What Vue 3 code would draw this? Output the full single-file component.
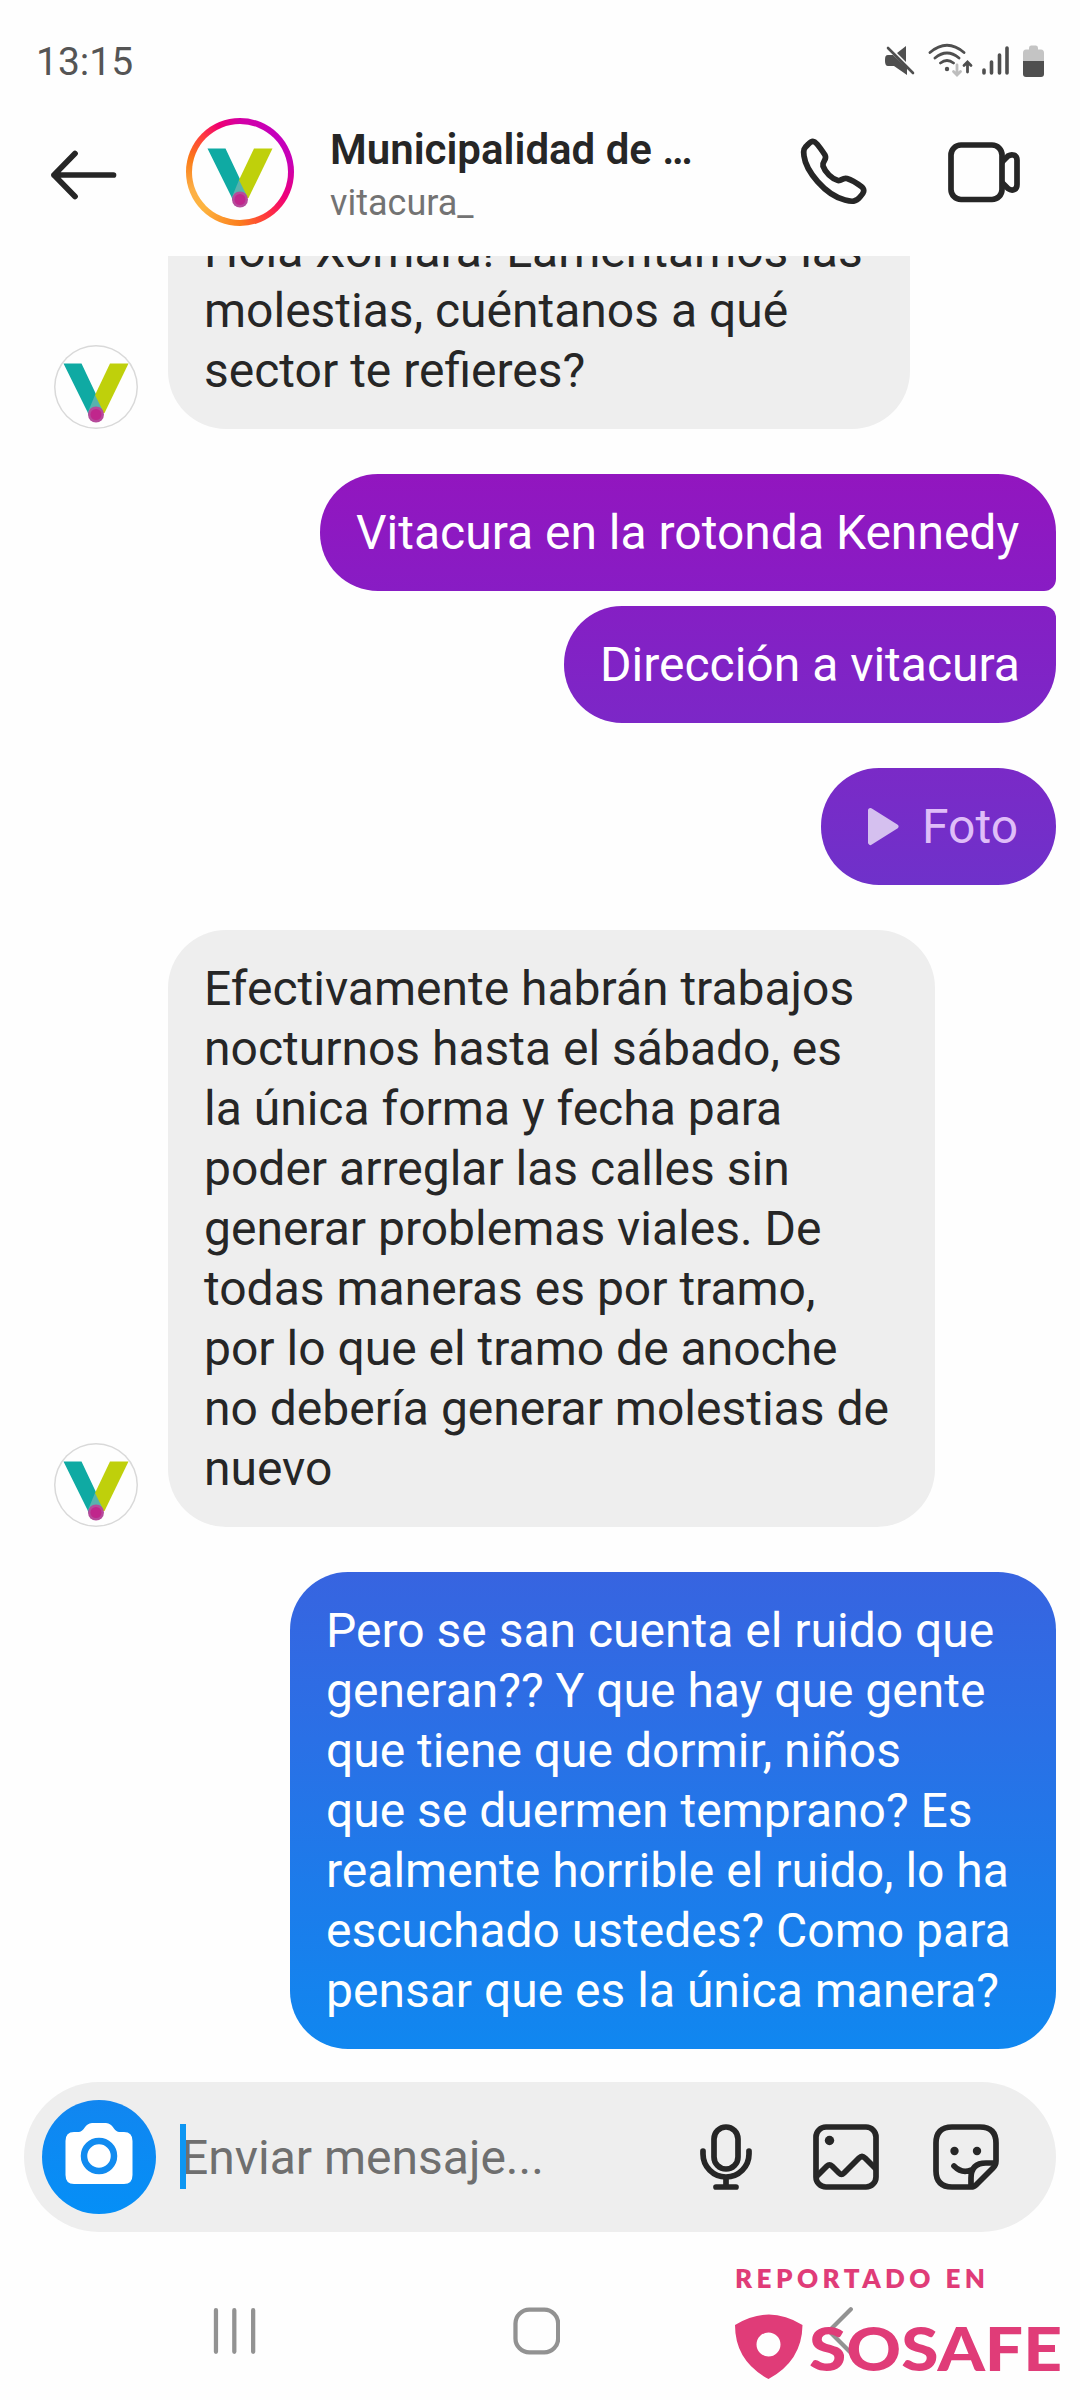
<script setup>
import { h } from 'vue'

const VLogo = () =>
  h('svg', { viewBox: '0 0 84 84', width: '100%', height: '100%' }, [
    h('path', { d: 'M9.500 18.500H27.500L49 64L42 77Q36 77 33.500 67Z', fill: '#0faaa3' }),
    h('path', { d: 'M56 18.500H74.500L50.500 68L42 70L41 50Z', fill: '#bfd00b' }),
    h('path', { d: 'M41 50L49 66L42 71L34 67Z', fill: '#58b3ae' }),
    h('circle', { cx: 42, cy: 69.500, r: 8, fill: '#b64a9b' }),
    h('circle', { cx: 42, cy: 69.500, r: 5.500, fill: '#c0268c' }),
  ])

const messages = [
  { side: 'in', kind: 'first', lines: ['Hola Xomara! Lamentamos las', 'molestias, cuéntanos a qué', 'sector te refieres?'] },
  { side: 'out', kind: 'a', lines: ['Vitacura en la rotonda Kennedy'] },
  { side: 'out', kind: 'b', lines: ['Dirección a vitacura'] },
  { side: 'out', kind: 'photo', lines: ['Foto'] },
  {
    side: 'in',
    kind: 'second',
    lines: [
      'Efectivamente habrán trabajos',
      'nocturnos hasta el sábado, es',
      'la única forma y fecha para',
      'poder arreglar las calles sin',
      'generar problemas viales. De',
      'todas maneras es por tramo,',
      'por lo que el tramo de anoche',
      'no debería generar molestias de',
      'nuevo',
    ],
  },
  {
    side: 'out',
    kind: 'last',
    lines: [
      'Pero se san cuenta el ruido que',
      'generan?? Y que hay que gente',
      'que tiene que dormir, niños',
      'que se duermen temprano? Es',
      'realmente horrible el ruido, lo ha',
      'escuchado ustedes? Como para',
      'pensar que es la única manera?',
    ],
  },
]
</script>

<template>
  <div class="screen">
    <div class="status">
      <span class="time">13:15</span>
      <svg class="status-icons" width="170" height="40" viewBox="0 0 170 40">
        <g fill="#4f4f4f">
          <path d="M3 15Q3 14 5 14H10L24 27V34L11 25H5Q2 25 2 20Q2 15 3 15ZM14 12L23 5V21Z" />
          <path d="M5 7L30 32" stroke="#4f4f4f" stroke-width="2.600" stroke-linecap="round" />
          <circle cx="64" cy="28" r="2.200" />
        </g>
        <g fill="none" stroke="#4f4f4f" stroke-width="2.800" stroke-linecap="round">
          <path d="M47 11.500Q64 -3 81 11.500M52 17Q64 7 76 17M57.500 22Q64 17 70.500 22" />
          <path d="M84.500 31V22M81 24.500L84.500 21L88 24.500" />
          <path d="M74 24V33M70.500 30.500L74 34L77.500 30.500" stroke="#bdbdbd" />
        </g>
        <path d="M101 29V32M108.500 21V32M116.500 14V32M124 7V32" stroke="#4f4f4f" stroke-width="3.600" stroke-linecap="round" />
        <path d="M140 21V12Q140 8.500 143 8.500H146V7Q146 4.500 148 4.500H153Q155 4.500 155 7V8.500H158Q161 8.500 161 12V21Z" fill="#c4c4c4" />
        <path d="M140 20H161V33Q161 36 158 36H143Q140 36 140 33Z" fill="#4f4f4f" />
      </svg>
    </div>

    <header class="header">
      <svg class="back" width="68" height="52" viewBox="0 0 68 52">
        <path d="M63.500 26H4M25 4.500L4 26L25 47.500" fill="none" stroke="#262626" stroke-width="5.700" stroke-linecap="round" stroke-linejoin="round" />
      </svg>
      <div class="ring"><div class="ring-inner"><VLogo /></div></div>
      <div class="names">
        <div class="title">Municipalidad de …</div>
        <div class="handle">vitacura_</div>
      </div>
      <svg class="phone" width="68" height="68" viewBox="0 0 68 68">
        <path d="M8 6.500C12 2.500 14 2.500 17 6C20 9.500 23 14 25 17C27.500 22 22 23 23 28C25 34 32 41 38 42.500C42 43 42 39.500 47 40.500C52 42 58 46 62 49C65 52 64 55 60 59C56 64 52 64 45 62C25 57 6 33 4 18C3 12 4 10 8 6.500Z" fill="none" stroke="#262626" stroke-width="5.700" stroke-linejoin="round" />
      </svg>
      <svg class="video" width="74" height="62" viewBox="0 0 74 62">
        <g fill="none" stroke="#262626" stroke-width="5.700" stroke-linejoin="round">
          <rect x="3" y="3" width="51" height="54.500" rx="10" />
          <path d="M54 20L60 14C64 11.500 69 13 69 18V42.500C69 48 64 49.500 60 46.500L54 40.500" />
        </g>
      </svg>
    </header>

    <main class="thread">
      <div v-for="(m, i) in messages" :key="i" class="row" :class="[m.side, m.kind]">
        <div v-if="m.side === 'in'" class="avatar"><VLogo /></div>
        <div class="bubble">
          <svg v-if="m.kind === 'photo'" class="play" width="32" height="40" viewBox="0 0 32 40">
            <path d="M2.500 3.500L28 19.500L2.500 35.500Z" fill="#d5c0ef" stroke="#d5c0ef" stroke-width="5" stroke-linejoin="round" />
          </svg>
          <div>
            <div v-for="line in m.lines" :key="line" class="line">{{ line }}</div>
          </div>
        </div>
      </div>
    </main>

    <div class="composer">
      <div class="camera">
        <svg width="68" height="68" viewBox="0 0 68 68">
          <path d="M9 13H14C19 13 20 4 27 4H41C48 4 49 13 54 13H59Q67.500 13 67.500 22V56Q67.500 65 59 65H9Q.5 65 .5 56V22Q.5 13 9 13Z" fill="#fff" />
          <circle cx="34" cy="37" r="15" fill="none" stroke="#118bf0" stroke-width="6.500" />
        </svg>
      </div>
      <div class="field"><span class="caret"></span>Enviar mensaje...</div>
      <svg class="mic" width="52" height="68" viewBox="0 0 52 68">
        <g fill="none" stroke="#262626" stroke-width="5.700" stroke-linecap="round">
          <rect x="14" y="4" width="24" height="42" rx="12" />
          <path d="M3 28V31A23 23 0 0 0 49 31V28M26 55V63M16 64H36" />
        </g>
      </svg>
      <svg class="gallery" width="68" height="68" viewBox="0 0 68 68">
        <g fill="none" stroke="#262626" stroke-width="5.700" stroke-linejoin="round">
          <rect x="4" y="4" width="60" height="60" rx="10" />
          <path d="M4 54L15 43Q17.500 40.500 20 43L27 50Q29.500 52.500 32 50L47 35Q50 32 53 35L64 46" />
        </g>
        <circle cx="17.500" cy="17.500" r="4.700" fill="#262626" />
      </svg>
      <svg class="sticker" width="68" height="68" viewBox="0 0 68 68">
        <g fill="none" stroke="#262626" stroke-width="5.700" stroke-linejoin="round" stroke-linecap="round">
          <path d="M40 64H20Q4 64 4 48V20Q4 4 20 4H48Q64 4 64 20V38Q64 42 61 45L44 62Q42 64 38 64" />
          <path d="M39 63V55Q39 40 54 40H63M22 43Q30 51 39 47" />
        </g>
        <circle cx="22.500" cy="28" r="4.200" fill="#262626" />
        <circle cx="45" cy="28" r="4.200" fill="#262626" />
      </svg>
    </div>

    <nav class="nav">
      <svg class="recents" width="46" height="50" viewBox="0 0 46 50">
        <path d="M5 4V46M23.500 4V46M42.500 4V46" stroke="#929292" stroke-width="4.300" stroke-linecap="round" />
      </svg>
      <svg class="home" width="48" height="48" viewBox="0 0 48 48">
        <rect x="2.500" y="2.500" width="43" height="43" rx="14" fill="none" stroke="#929292" stroke-width="4.300" />
      </svg>
      <svg class="go-back" width="30" height="54" viewBox="0 0 30 54">
        <path d="M25 4L3 26L25 48" fill="none" stroke="#929292" stroke-width="4.300" stroke-linecap="round" />
      </svg>
      <svg class="mark" width="344" height="130" viewBox="0 0 344 130">
        <text x="-1" y="28" class="reported" textLength="250" lengthAdjust="spacing">REPORTADO EN</text>
        <path fill="#e03c78" fill-rule="evenodd" d="M-1 65Q33 44 66.500 65Q66 101 32.500 119Q-1 101 -1 65ZM32.500 72.500A12 12 0 1 0 32.500 96.500A12 12 0 1 0 32.500 72.500Z" />
        <text x="73" y="111" class="brand" textLength="253" lengthAdjust="spacingAndGlyphs">SOSAFE</text>
      </svg>
    </nav>
  </div>
</template>

<style>
body {
  margin: 0;
  background: #fefefe;
}
</style>

<style scoped>
.screen {
  width: 1080px;
  height: 2400px;
  display: flex;
  flex-direction: column;
  overflow: hidden;
  background: #fefefe;
  font-family: Roboto, "Liberation Sans", sans-serif;
  color: #262626;
}
.status {
  height: 98px;
  flex: none;
  box-sizing: border-box;
  padding: 39px 27px 0 36px;
  display: flex;
  justify-content: space-between;
  align-items: flex-start;
}
.time {
  font-size: 39px;
  line-height: 46px;
  color: #555;
}
.status-icons {
  margin-top: 2px;
}
.header {
  height: 158px;
  flex: none;
  display: flex;
  align-items: flex-start;
}
.back {
  margin: 51px 0 0 50px;
}
.ring {
  width: 108px;
  height: 108px;
  margin: 20px 0 0 68px;
  border-radius: 50%;
  display: flex;
  align-items: center;
  justify-content: center;
  background: conic-gradient(#d300a5 0deg, #c400bd 45deg, #c800b4 80deg, #f00078 120deg, #ff3040 145deg, #fb7d1d 180deg, #fdb43f 225deg, #fcaf45 250deg, #fb7a18 285deg, #ff3a40 315deg, #f00070 335deg, #d300a5 360deg);
}
.ring-inner {
  width: 96px;
  height: 96px;
  border-radius: 50%;
  background: #fefefe;
  display: flex;
  align-items: center;
  justify-content: center;
}
.ring-inner > svg {
  width: 84px;
  height: 84px;
}
.names {
  width: 370px;
  margin: 27px 0 0 36px;
  white-space: nowrap;
}
.title {
  font-size: 42px;
  font-weight: 600;
  line-height: 50px;
}
.handle {
  margin-top: 6px;
  font-size: 36px;
  line-height: 44px;
  color: #737373;
}
.phone {
  margin: 40px 0 0 100px;
}
.video {
  margin: 44px 0 0 80px;
}
.thread {
  flex: none;
  height: 1793px;
  overflow: hidden;
  display: flex;
  flex-direction: column;
  justify-content: flex-end;
}
.row {
  flex: none;
  display: flex;
  align-items: flex-end;
  margin-top: 45px;
  padding-right: 24px;
}
.row.out {
  justify-content: flex-end;
}
.row.b {
  margin-top: 15px;
}
.avatar {
  width: 84px;
  height: 84px;
  margin: 0 30px 0 54px;
  border-radius: 50%;
  box-shadow: inset 0 0 0 1.500px #d9d9d9;
}
.bubble {
  display: flex;
  align-items: center;
  box-sizing: border-box;
  padding: 28.500px 0 28.500px 36px;
  border-radius: 58px;
  background: #eee;
}
.line {
  font-size: 48px;
  line-height: 60px;
  white-space: nowrap;
}
.first .bubble {
  width: 742px;
}
.second .bubble {
  width: 767px;
}
.out .bubble {
  color: #fff;
}
.a .bubble {
  width: 736px;
  background: linear-gradient(#9216bf, #881cc4);
  border-bottom-right-radius: 12px;
}
.b .bubble {
  width: 492px;
  background: linear-gradient(#851fc4, #7c27c7);
  border-top-right-radius: 12px;
}
.photo .bubble {
  width: 235px;
  padding-left: 47px;
  color: #dfbdf8;
  background: linear-gradient(#7a2ac7, #6f31ca);
}
.play {
  margin-right: 22px;
}
.last .bubble {
  width: 766px;
  background: linear-gradient(#3764e0, #2a70e6 35%, #1d7bea 65%, #1087f0);
}
.composer {
  flex: none;
  width: 1032px;
  height: 150px;
  box-sizing: border-box;
  margin: 33px 0 0 24px;
  padding-left: 18px;
  border-radius: 75px;
  background: #eee;
  display: flex;
  align-items: center;
}
.camera {
  width: 114px;
  height: 114px;
  border-radius: 50%;
  background: linear-gradient(#1186f0, #058ff7);
  display: flex;
  align-items: center;
  justify-content: center;
}
.camera svg {
  margin-top: -8px;
}
.field {
  position: relative;
  width: 519px;
  margin-left: 25px;
  padding-top: 2px;
  font-size: 48px;
  line-height: 60px;
  color: #6f6f6f;
  white-space: nowrap;
}
.caret {
  position: absolute;
  left: -1px;
  top: -2px;
  width: 6px;
  height: 65px;
  background: #0d96f2;
}
.gallery {
  margin-left: 60px;
}
.sticker {
  margin-left: 52px;
}
.nav {
  flex: 1;
  display: flex;
  align-items: flex-start;
}
.recents {
  margin: 74px 0 0 211px;
}
.home {
  margin: 75px 0 0 256px;
}
.go-back {
  margin: 73px 0 0 266px;
}
.mark {
  margin: 28px 0 0 -120px;
  overflow: visible;
}
.reported,
.brand {
  font-family: Lato, "Open Sans", sans-serif;
  fill: #e03c78;
}
.reported {
  font-size: 26px;
  font-weight: 800;
}
.brand {
  font-size: 61px;
  font-weight: 900;
}
</style>
